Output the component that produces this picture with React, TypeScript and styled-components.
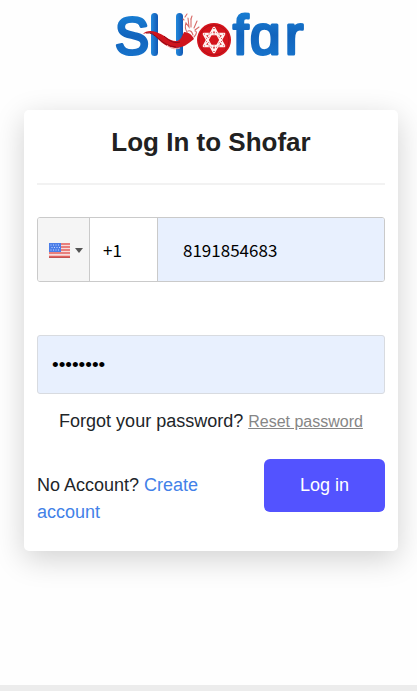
import React, { useState } from "react";
import styled, { createGlobalStyle } from "styled-components";

const GlobalStyle = createGlobalStyle`
  *, *::before, *::after { box-sizing: border-box; }
  body {
    margin: 0;
    background: #fefefe;
    color: #212529;
    font-family: "Liberation Sans", Arial, sans-serif;
    font-size: 18px;
    line-height: 27px;
  }
`;

const Page = styled.div`
  min-height: 100vh;
  display: flex;
  flex-direction: column;
`;

const Main = styled.main`
  flex: 1;
  padding: 0 19px 24px 24px;
  display: flex;
  flex-direction: column;
`;

const Logo = styled.svg`
  align-self: center;
  width: 192px;
  height: 70px;
  margin-bottom: 40px;
`;

const Card = styled.form`
  padding: 13px 13px 25px;
  border-radius: 5px;
  background: #fff;
  box-shadow: 0 8px 30px rgba(0, 0, 0, 0.18);
`;

const Title = styled.h1`
  margin: 0 0 32px;
  padding-bottom: 22px;
  border-bottom: 2px solid #f2f2f2;
  color: #212121;
  font-size: 26px;
  line-height: 38px;
  text-align: center;
`;

const PhoneField = styled.div`
  display: flex;
  height: 65px;
  margin-bottom: 53px;
  border: 1px solid #cacaca;
  border-radius: 3px;
  overflow: hidden;
`;

const CountryButton = styled.button`
  flex: none;
  width: 52px;
  padding: 2px 0 0 11px;
  display: flex;
  align-items: center;
  gap: 5px;
  border: 0;
  border-right: 1px solid #cacaca;
  background: #f5f5f5;
`;

const TextInput = styled.input`
  min-width: 0;
  border: 0;
  border-radius: 0;
  outline: none;
  background: #e8f0fe;
  color: #000;
  font-family: "Noto Sans CJK JP", "Noto Sans", sans-serif;
  font-size: 17px;
`;

const CodeInput = styled(TextInput)`
  flex: none;
  width: 68px;
  padding: 0 12px 0 13px;
  border-right: 1px solid #cacaca;
  background: #fff;
`;

const NumberInput = styled(TextInput)`
  flex: 1;
  padding: 0 25px;
`;

const PasswordInput = styled(TextInput)`
  display: block;
  width: 100%;
  height: 59px;
  padding: 0 14px;
  border: 1px solid #d8dbe0;
  border-radius: 3px;
  font-family: "Liberation Sans", Arial, sans-serif;
  font-size: 19px;
`;

const Forgot = styled.p`
  margin: 14px 0 24px;
  text-align: center;
`;

const ResetLink = styled.a`
  color: #868686;
  font-size: 16px;
`;

const Actions = styled.div`
  display: flex;
  align-items: flex-start;
  justify-content: space-between;
  gap: 24px;
`;

const SignUp = styled.p`
  flex: 1;
  margin: 13px 0 0;
`;

const CreateLink = styled.a`
  color: #4281e8;
  text-decoration: none;
`;

const LoginButton = styled.button`
  flex: none;
  padding: 13px 36px;
  border: 0;
  border-radius: 6px;
  background: #5353ff;
  color: #fff;
  font: inherit;
`;

const FooterStrip = styled.footer`
  height: 6px;
  background: #ececec;
`;

function ShofarLogo() {
  return (
    <Logo viewBox="0 -10 192 70" role="img" aria-label="Shofar">
      <defs>
        <linearGradient id="blue" x1="0" y1="0" x2="0" y2="1">
          <stop offset="0" stopColor="#1a86da" />
          <stop offset="0.5" stopColor="#1264bd" />
          <stop offset="1" stopColor="#1878d0" />
        </linearGradient>
        <linearGradient id="bar" x1="0" y1="0" x2="1" y2="0">
          <stop offset="0" stopColor="#2389dc" />
          <stop offset="1" stopColor="#1158b4" />
        </linearGradient>
      </defs>
      <g
        fill="url(#blue)"
        stroke="url(#blue)"
        strokeWidth="3"
        strokeLinejoin="round"
        fontFamily="Liberation Sans, Arial, sans-serif"
      >
        <text x="0" y="44" fontSize="51">S</text>
        <text x="118 135 170" y="44" fontSize="55">fɑr</text>
      </g>
      <rect x="36" y="3" width="7" height="43" rx="3.5" fill="url(#bar)" />
      <rect x="61" y="3" width="7" height="43" rx="3.5" fill="url(#bar)" />
      <path
        d="M28 24c2-3 8-4 13-2 9 3 14 10 21 9 4-1 5-5 7-9 5 0 8 3 10 7-6 5-11 9-19 9-12-1-17-10-22-14-3-2-6-1-10 0z"
        fill="#cf141d"
      />
      <path
        d="M31 23c10-2 14 13 30 14M49 26c5 5 11 8 16 6"
        fill="none"
        stroke="#8d0b18"
        strokeWidth="1"
      />
      <path d="M52 35c3 3 7 5 13 3" fill="none" stroke="#f2a9a5" strokeWidth="1" />
      <g fill="none" stroke="#d86b68" strokeWidth="1.1" strokeLinecap="round">
        <path d="M72 22c-2-3-2-6-1-9l3 4-1-9m3 9 0-8m3 9 3-7m-2 9 4-3m-4 4c2 0 2 3-1 6M73 21c3-1 4 1 5 4" />
        <path d="M70 7l2-3m4 5 1-3m-8 4-1-1" />
      </g>
      <circle cx="99" cy="30" r="17" fill="#d4141c" />
      <circle cx="99" cy="30" r="15" fill="none" stroke="#b50f1a" />
      <g fill="none" stroke="#fff3f1" strokeWidth="2.6" strokeLinejoin="round">
        <path d="M99 18l10 18H89z" />
        <path d="M99 42l10-18H89z" />
      </g>
      <path
        d="M99 18l10 18H89zM99 42l10-18H89z"
        fill="none"
        stroke="#cf3a3e"
        strokeWidth="1"
        strokeDasharray="1 4"
      />
    </Logo>
  );
}

function FlagIcon() {
  return (
    <svg width="21" height="15" viewBox="0 0 21 15" aria-hidden="true">
      <rect width="21" height="15" fill="#f6dcdc" />
      <path
        d="M0 1h21M0 4h21M0 7h21M0 10h21M0 13.5h21"
        stroke="#e4605c"
        strokeWidth="1.6"
      />
      <rect width="12" height="9" fill="#4a7de8" />
      <path
        d="M1.5 2h10M2.5 4.5h9M1.5 7h10"
        stroke="#c7d9ff"
        strokeWidth="1"
        strokeDasharray="1 1.5"
      />
      <path d="M0 14.5h21" stroke="#bd5555" />
    </svg>
  );
}

export default function App() {
  const [code, setCode] = useState("+1");
  const [phone, setPhone] = useState("8191854683");
  const [password, setPassword] = useState("password");

  return (
    <>
      <GlobalStyle />
      <Page>
        <Main>
          <ShofarLogo />
          <Card onSubmit={(e: React.FormEvent) => e.preventDefault()}>
            <Title>Log In to Shofar</Title>
            <PhoneField>
              <CountryButton type="button" aria-label="Country: United States">
                <FlagIcon />
                <svg width="8" height="5" viewBox="0 0 8 5" aria-hidden="true">
                  <path d="M0 0h8L4 5z" fill="#555" />
                </svg>
              </CountryButton>
              <CodeInput
                aria-label="Country code"
                value={code}
                onChange={(e) => setCode(e.target.value)}
              />
              <NumberInput
                type="tel"
                aria-label="Phone number"
                value={phone}
                onChange={(e) => setPhone(e.target.value)}
              />
            </PhoneField>
            <PasswordInput
              type="password"
              aria-label="Password"
              value={password}
              onChange={(e) => setPassword(e.target.value)}
            />
            <Forgot>
              Forgot your password? <ResetLink href="#reset">Reset password</ResetLink>
            </Forgot>
            <Actions>
              <SignUp>
                No Account? <CreateLink href="#create">Create account</CreateLink>
              </SignUp>
              <LoginButton type="submit">Log in</LoginButton>
            </Actions>
          </Card>
        </Main>
        <FooterStrip />
      </Page>
    </>
  );
}
